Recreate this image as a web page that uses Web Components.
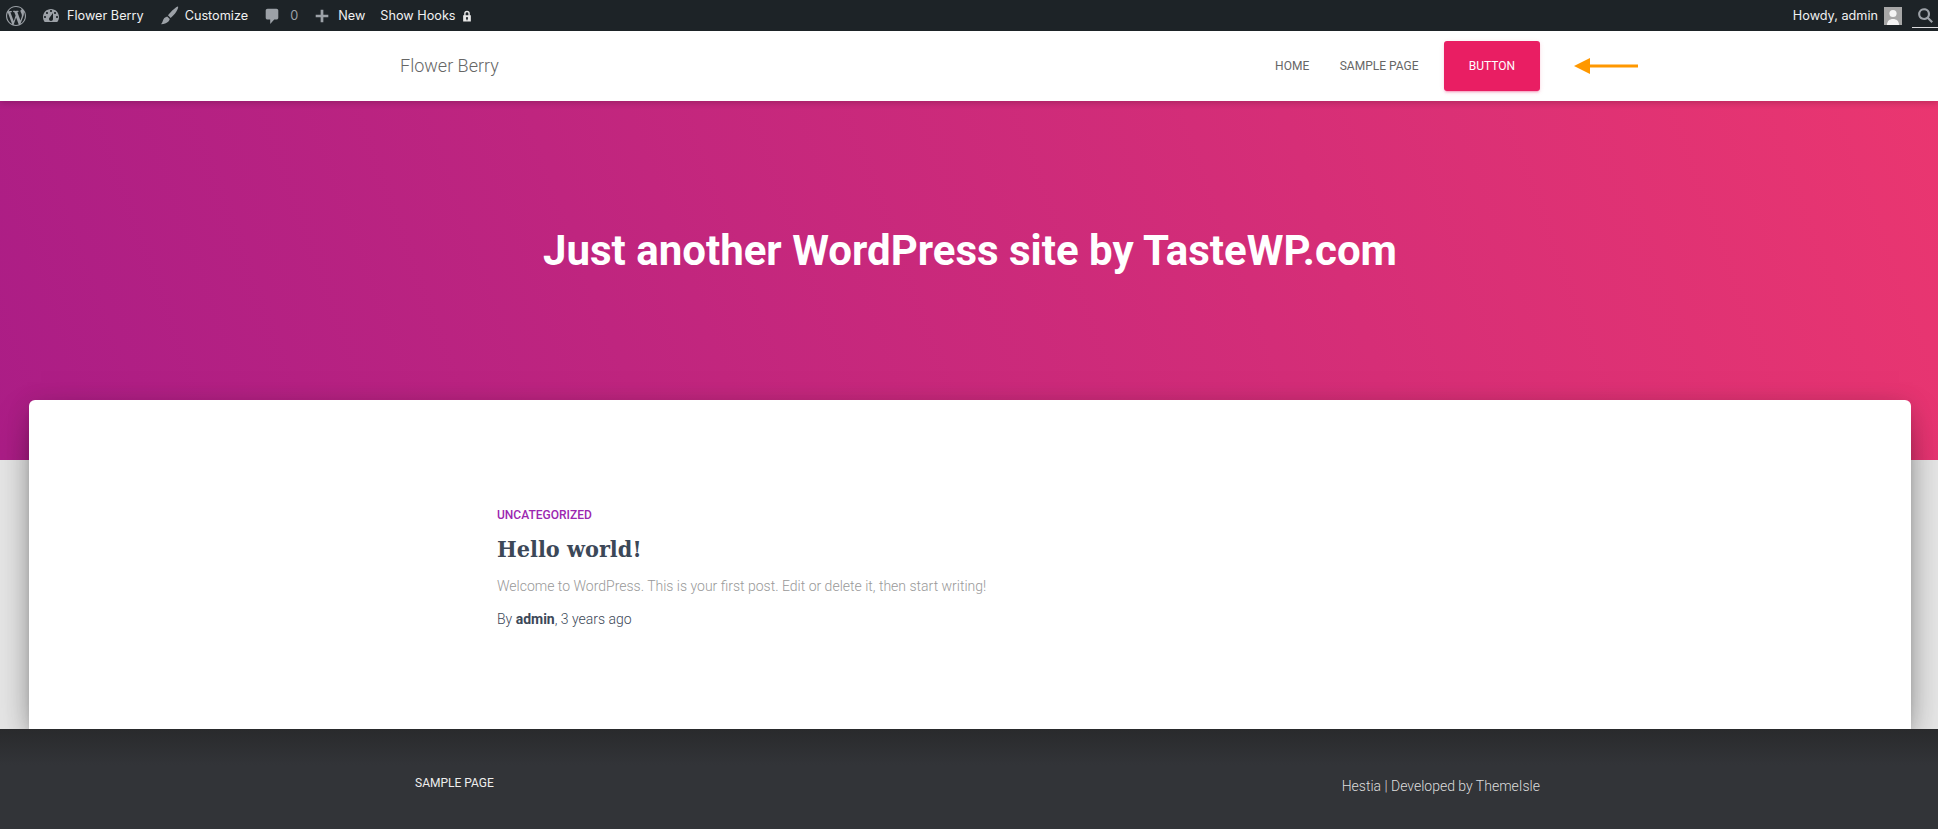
<!DOCTYPE html>
<html lang="en">
<head>
<meta charset="utf-8">
<title>Flower Berry</title>
<style>
  html, body { margin: 0; padding: 0; background: #e5e5e5; }
  body { font-family: Roboto, "Liberation Sans", sans-serif; }
</style>
</head>
<body>
<site-page>
  <admin-bar slot="bar"></admin-bar>
  <site-nav slot="nav" title="Flower Berry"></site-nav>
  <hero-banner slot="hero">Just another WordPress site by TasteWP.com</hero-banner>
  <post-card slot="main" category="Uncategorized" heading="Hello world!" author="admin" age="3 years ago">
    Welcome to WordPress. This is your first post. Edit or delete it, then start writing!
  </post-card>
  <site-footer slot="footer"></site-footer>
</site-page>

<script>
const ICONS = {
  wp: '<path d="M20 10c0-5.51-4.49-10-10-10C4.48 0 0 4.49 0 10c0 5.52 4.48 10 10 10 5.51 0 10-4.48 10-10zM7.78 15.37L4.37 6.22c.55-.02 1.17-.08 1.17-.08.5-.06.44-1.13-.06-1.11 0 0-1.45.11-2.37.11-.18 0-.37 0-.58-.01C4.12 2.69 6.87 1.11 10 1.11c2.33 0 4.45.87 6.05 2.34-.68-.11-1.65.39-1.65 1.58 0 .74.45 1.36.9 2.1.35.61.55 1.36.55 2.46 0 1.49-1.4 5-1.4 5l-3.03-8.37c.54-.02.82-.17.82-.17.5-.05.44-1.25-.06-1.22 0 0-1.44.12-2.38.12-.87 0-2.33-.12-2.33-.12-.5-.03-.56 1.2-.06 1.22l.92.08 1.26 3.41zM17.41 10c.24-.64.74-1.87.43-4.25.7 1.29 1.05 2.71 1.05 4.25 0 3.29-1.73 6.24-4.4 7.78.97-2.59 1.94-5.2 2.92-7.78zM6.1 18.09C3.12 16.65 1.11 13.53 1.11 10c0-1.3.23-2.48.72-3.59C3.25 10.3 4.67 14.2 6.1 18.09zm4.03-6.63l2.58 6.98c-.86.29-1.76.45-2.71.45-.79 0-1.57-.11-2.29-.33.81-2.38 1.62-4.74 2.42-7.1z"/>',
  dash: '<path fill-rule="evenodd" d="M3.76 16h12.48c1.1-1.37 1.76-3.11 1.76-5 0-4.42-3.58-8-8-8s-8 3.58-8 8c0 1.89.66 3.63 1.76 5zM10 4c.55 0 1 .45 1 1s-.45 1-1 1-1-.45-1-1 .45-1 1-1zM6 6c.55 0 1 .45 1 1s-.45 1-1 1-1-.45-1-1 .45-1 1-1zm8 0c.55 0 1 .45 1 1s-.45 1-1 1-1-.45-1-1 .45-1 1-1zm-5.37 5.55L12 7v6c0 1.1-.9 2-2 2s-2-.9-2-2c0-.57.24-1.08.63-1.45zM4 10c.55 0 1 .45 1 1s-.45 1-1 1-1-.45-1-1 .45-1 1-1zm12 0c.55 0 1 .45 1 1s-.45 1-1 1-1-.45-1-1 .45-1 1-1z"/>',
  brush: '<path d="M19 .6c.5.5-.3 3-1.900 5.400-1.500 2.300-3.700 4.800-5.900 6.500l-2.800-2.700c1.600-2.300 3.900-4.800 6.100-6.500 2-1.500 4-3.200 4.500-2.700zM7.600 11l2.700 2.600c-.6 2.500-2.400 3.700-4.200 4.500-1.600.7-3.300.9-5 1 1.100-1 1.500-2.200 2-3.800.6-2 1.800-3.600 4.500-4.300z"/>',
  comment: '<path d="M5 2h10c1.100 0 2 .9 2 2v8c0 1.100-.9 2-2 2h-2.500l-4.500 5v-5H5c-1.100 0-2-.9-2-2V4c0-1.100.9-2 2-2z"/>',
  plus: '<path d="M17 8.500v3h-5.500V17h-3v-5.500H3v-3h5.500V3h3v5.500H17z"/>',
  lock: '<path d="M6 9V6.500a4 4 0 0 1 8 0V9h1.500v9h-11V9H6zm2 0h4V6.500a2 2 0 0 0-4 0V9zm2 2.500a1.500 1.500 0 0 0-.8 2.800V16h1.600v-1.700a1.500 1.500 0 0 0-.8-2.800z" fill-rule="evenodd"/>',
  search: '<path fill-rule="evenodd" d="M12.300 14.100a7 7 0 1 1 1.800-1.800l4.700 4.700-1.800 1.800-4.700-4.700zM8.300 12.800a4.500 4.500 0 1 0 0-9 4.500 4.500 0 0 0 0 9z"/>'
};

class SitePage extends HTMLElement {
  constructor() {
    super();
    this.attachShadow({ mode: "open" });
    this.shadowRoot.innerHTML = `
      <style>
        :host { display:flex; flex-direction:column; height:829px; overflow:hidden; }
      </style>
      <slot name="bar"></slot>
      <slot name="nav"></slot>
      <slot name="hero"></slot>
      <slot name="main"></slot>
      <slot name="footer"></slot>
    `;
  }
}

class AdminBar extends HTMLElement {
  constructor() {
    super();
    this.attachShadow({ mode: "open" });
  }

  connectedCallback() {
    this._render();
  }

  _icon(name, size) {
    return `<svg viewBox="0 0 20 20" width="${size}" height="${size}">${ICONS[name]}</svg>`;
  }

  _render() {
    this.shadowRoot.innerHTML = `
      <style>
        :host { display:flex; align-items:center; height:31px; flex:none; background:#1d2327; color:#f0f0f1;
                font:400 12.7px/31px Inter, "Liberation Sans", sans-serif; padding-left:6px; position:relative; z-index:3; }
        svg { fill:#9ca1a7; flex:none; display:block; }
        .item { display:flex; align-items:center; }
        .dim { color:#9ca1a7; }
        .lock svg { fill:#e8e8e8; }
        .right { margin-left:auto; display:flex; align-items:center; height:31px; }
        .avatar { width:18px; height:18px; background:#a7a7a7; margin:0 10px 0 6px; display:block; }
        .avatar svg { fill:#f4f4f4; }
        .search { width:26px; height:28px; border-bottom:1px solid #dcdcde; display:flex; justify-content:center; align-items:center; margin-bottom:3px; padding-top:4px; box-sizing:border-box; }
      </style>
      <div class="item" style="margin-right:15px">${this._icon("wp", 20)}</div>
      <div class="item" style="margin-right:16px">${this._icon("dash", 20)}<span style="margin-left:6px">Flower Berry</span></div>
      <div class="item" style="margin-right:15px">${this._icon("brush", 19)}<span style="margin-left:6px">Customize</span></div>
      <div class="item" style="margin-right:15px">${this._icon("comment", 18)}<span class="dim" style="margin-left:9px">0</span></div>
      <div class="item" style="margin-right:15px">${this._icon("plus", 18)}<span style="margin-left:7px">New</span></div>
      <div class="item"><span>Show Hooks</span><span class="lock" style="margin-left:4px">${this._icon("lock", 14)}</span></div>
      <div class="right">
        <span>Howdy, admin</span>
        <span class="avatar"><svg viewBox="0 0 18 18" width="18" height="18"><circle cx="9" cy="6.500" r="3.600"/><path d="M3 18c0-4 2.500-6 6-6s6 2 6 6z"/></svg></span>
        <span class="search">${this._icon("search", 17)}</span>
      </div>
    `;
  }
}

class SiteNav extends HTMLElement {
  constructor() {
    super();
    this.attachShadow({ mode: "open" });
  }

  connectedCallback() {
    this.shadowRoot.innerHTML = `
      <style>
        :host { display:flex; align-items:center; height:70px; flex:none; background:#fff; padding:0 300px 0 400px; box-sizing:border-box;
                position:relative; z-index:2; box-shadow:0 2px 6px rgba(0,0,0,.18); }
        .brand { font-weight:300; font-size:18px; color:#666; margin-top:-2px; }
        nav { margin-left:auto; display:flex; align-items:center; font-size:12px; color:#666; }
        a { color:inherit; text-decoration:none; }
        .home { margin-right:30.5px; }
        .btn { margin-left:25.5px; width:96px; height:50px; background:#e91e63; color:#fff; border-radius:3px; display:flex; align-items:center; justify-content:center;
               box-shadow:0 2px 2px rgba(233,30,99,.14), 0 3px 1px -2px rgba(233,30,99,.2), 0 1px 5px rgba(233,30,99,.12); }
        svg { margin-left:34px; display:block; }
      </style>
      <div class="brand">${this.getAttribute("title")}</div>
      <nav>
        <a class="home" href="#">HOME</a>
        <a href="#">SAMPLE PAGE</a>
        <a class="btn" href="#">BUTTON</a>
        <svg width="64" height="18" viewBox="0 0 64 18"><path d="M0 9l16-8V7.500h48v3H16V17z" fill="#ff9800"/></svg>
      </nav>
    `;
  }
}

class HeroBanner extends HTMLElement {
  constructor() {
    super();
    this.attachShadow({ mode: "open" });
    this.shadowRoot.innerHTML = `
      <style>
        :host { display:block; height:359px; flex:none; background:linear-gradient(70deg, #ab1d86 0%, #ea3670 100%); color:#fff; }
        h1 { margin:0; padding:124px 0 0 2px; text-align:center; font:700 42px/52px Roboto, sans-serif; }
      </style>
      <h1><slot></slot></h1>
    `;
  }
}

class PostCard extends HTMLElement {
  constructor() {
    super();
    this.attachShadow({ mode: "open" });
  }

  connectedCallback() {
    const get = (n) => this.getAttribute(n) || "";
    this.shadowRoot.innerHTML = `
      <style>
        :host { display:block; flex:none; height:329px; margin:-60px 27px 0 29px; background:#fff; border-radius:6px 6px 0 0; position:relative; z-index:1;
                padding:107px 0 0 468px; box-sizing:border-box;
                box-shadow:0 16px 38px -12px rgba(0,0,0,.56), 0 4px 25px 0 rgba(0,0,0,.12), 0 8px 10px -5px rgba(0,0,0,.2); }
        .cat { font:500 12px/16px Roboto, sans-serif; color:#9c27b0; text-transform:uppercase; }
        h2 { margin:10px 0 0; font:700 23.2px/32px "DejaVu Serif Condensed", "DejaVu Serif", serif; font-stretch:condensed; color:#3c4858; }
        p { margin:11px 0 0; font:300 14px/20px Roboto, sans-serif; color:#999; }
        .meta { margin-top:13px; font:300 14px/20px Roboto, sans-serif; color:#3c4858; }
        b { font-weight:700; }
      </style>
      <div class="cat">${get("category")}</div>
      <h2>${get("heading")}</h2>
      <p><slot></slot></p>
      <div class="meta">By <b>${get("author")}</b>, ${get("age")}</div>
    `;
  }
}

class SiteFooter extends HTMLElement {
  constructor() {
    super();
    this.attachShadow({ mode: "open" });
    this.shadowRoot.innerHTML = `
      <style>
        :host { display:flex; flex:none; height:100px; box-sizing:border-box; padding:44px 398px 0 415px; justify-content:space-between; position:relative; z-index:2;
                background:linear-gradient(#292a2c 0, #323438 36px); color:#eee; }
        .links { font:400 12px/20px Roboto, sans-serif; }
        .credit { font:300 14px/24px Roboto, sans-serif; color:#ddd; margin-top:1px; }
      </style>
      <div class="links">SAMPLE PAGE</div>
      <div class="credit">Hestia | Developed by ThemeIsle</div>
    `;
  }
}

customElements.define("site-page", SitePage);
customElements.define("admin-bar", AdminBar);
customElements.define("site-nav", SiteNav);
customElements.define("hero-banner", HeroBanner);
customElements.define("post-card", PostCard);
customElements.define("site-footer", SiteFooter);
</script>
</body>
</html>
